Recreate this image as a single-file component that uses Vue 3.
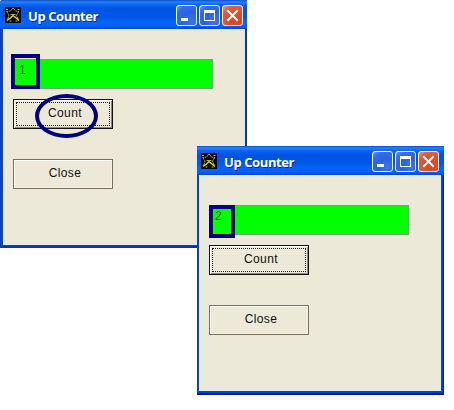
<script setup>
const windows = [
  { id: 'first', value: '1', circled: true },
  { id: 'second', value: '2', circled: false },
]
</script>

<template>
  <main class="desktop">
    <section v-for="w in windows" :key="w.id" class="window" :class="w.id">
      <header class="titlebar">
        <svg class="app-icon" viewBox="0 0 16 16" width="16" height="16">
          <rect width="16" height="16" fill="#050800" />
          <g fill="none" stroke-linecap="square">
            <path d="M7.5 1.5L5.5 4 2 4.5M8.5 1.5L10.5 4l3 .5M2 5l2 3-1.500 5M13.500 5l-2 3 2 5" stroke="#a9a52c" stroke-width="1" stroke-dasharray="1.500 1.500" />
            <path d="M2.500 13l3-2L8 8.500l2.500 2 3 2.500" stroke="#eee22c" stroke-width="1.300" />
            <path d="M6 7.500h4M1.500 2.500h1M13 2.500h1M5 14h1M11 14h1" stroke="#b8a848" />
          </g>
        </svg>
        <h1 class="title">Up Counter</h1>
        <div class="controls">
          <button class="control" aria-label="Minimize">
            <svg viewBox="0 0 21 21" width="21" height="21"><path d="M5 13h7v3H5z" fill="#fff" /></svg>
          </button>
          <button class="control" aria-label="Maximize">
            <svg viewBox="0 0 21 21" width="21" height="21"><path fill-rule="evenodd" d="M5 5h11v11H5zM6 8v7h9V8z" fill="#fff" /></svg>
          </button>
          <button class="control close" aria-label="Close window">
            <svg viewBox="0 0 21 21" width="21" height="21"><path d="M6 6l9 9M15 6l-9 9" stroke="#fff" stroke-width="2" stroke-linecap="square" /></svg>
          </button>
        </div>
      </header>
      <div class="body">
        <div class="field"><span>{{ w.value }}</span></div>
        <button class="push focused"><span>Count</span></button>
        <button class="push quit"><span>Close</span></button>
      </div>
      <div class="mark"></div>
      <div v-if="w.circled" class="ring"></div>
    </section>
  </main>
</template>

<style>
body { background: #fff; }
</style>

<style scoped>
.desktop {
  position: relative;
  width: 454px;
  height: 410px;
  overflow: hidden;
  background: #fff;
  font-family: "Liberation Sans", Arial, sans-serif;
}
.window {
  position: absolute;
  box-sizing: border-box;
  display: flex;
  flex-direction: column;
  width: 247px;
  background: #0b45c4;
}
.first {
  left: 0;
  top: 0;
  height: 248px;
  padding: 0 2px 3px 3px;
  border-radius: 3px 0 0 0;
  box-shadow: inset 1px 0 #0a3fc6, inset -2px 0 #0b3f8c, inset 0 -2px #0a35ae;
}
.second {
  left: 197px;
  top: 146px;
  height: 249px;
  padding: 0 3px 4px 2px;
  box-shadow: inset -1px 0 #001f9a, inset 0 -2px #001c9a;
}
.titlebar {
  box-sizing: border-box;
  flex: none;
  display: flex;
  align-items: flex-start;
  height: 29px;
  padding: 5px 4px 0 5px;
  background: linear-gradient(#0b50c8 0, #2b80f8 2px, #0762ee 5px, #0054e0 9px, #0056e8 17px, #0465fc 22px, #0362f8 26px, #0046cc 29px);
}
.first .titlebar { margin: 0 -2px 0 -3px; border-radius: 3px 0 0 0; }
.second .titlebar { margin: 0 -3px 0 -2px; padding: 5px 5px 0 4px; }
.app-icon { display: block; margin-top: 2px; }
.title {
  margin: 1px 0 0 7px;
  color: #fff;
  font: bold 13px/20px "Open Sans", "Noto Sans", sans-serif;
  letter-spacing: -0.4px;
  text-shadow: 1px 1px 0 #06308f;
  white-space: nowrap;
}
.controls { display: flex; gap: 2px; margin-left: auto; }
.control {
  box-sizing: border-box;
  width: 21px;
  height: 21px;
  padding: 0;
  border: 1px solid #f0f5ff;
  border-radius: 3px;
  background: radial-gradient(circle at 75% 80%, #3476f6 0, #2a62e4 45%, #386be0 75%, #7098ed 100%);
}
.control svg { display: block; margin: -1px; }
.control.close { background: radial-gradient(circle at 75% 80%, #d8481f 0, #d94f2c 45%, #dc6142 75%, #ee9a80 100%); }
.body {
  flex: 1;
  display: flex;
  flex-direction: column;
  align-items: flex-start;
  padding: 30px 0 0 10px;
  background: #ece9d8;
  box-shadow: inset 0 -1px #e3ebf3;
}
.first .body { box-shadow: inset -1px 0 #dfe2ee, inset 0 -1px #e3ebf3; }
.field {
  box-sizing: border-box;
  width: 200px;
  height: 30px;
  padding: 3px 5px;
  border: 1px solid #7ba07b;
  background: #0f0;
  color: #085808;
  font-size: 12px;
  line-height: 14px;
}
.push {
  position: relative;
  box-sizing: border-box;
  width: 100px;
  height: 30px;
  margin-top: 10px;
  padding: 0 0 2px 4px;
  border: 1px solid #75705f;
  background: #ece9d8;
  box-shadow: inset 1px 1px #fff, inset -1px -1px #f6f3e6;
  color: #111;
  font: 12px/26px "Liberation Sans", Arial, sans-serif;
  letter-spacing: 0.4px;
  text-align: center;
}
.push span { display: block; }
.focused { border-color: #111; box-shadow: inset 1px 1px #fff, inset -1px -1px #8e8979; }
.focused::after {
  content: "";
  position: absolute;
  inset: 2px;
  border: 1px dotted #222;
}
.quit { margin-top: 30px; }
.mark, .ring {
  position: absolute;
  box-sizing: border-box;
  border: 4px solid #000080;
}
.first .mark { left: 11px; top: 54px; width: 29px; height: 35px; }
.second .mark { left: 12px; top: 59px; width: 26px; height: 33px; }
.ring { left: 35px; top: 94px; width: 63px; height: 44px; border-radius: 50%; }
</style>
